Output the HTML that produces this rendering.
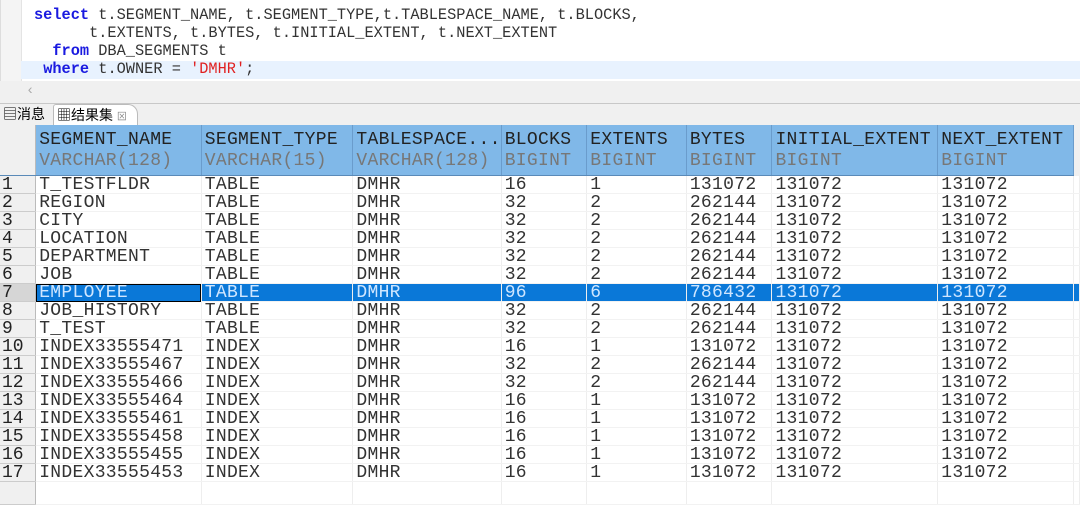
<!DOCTYPE html><html><head><style>
body{margin:0;width:1080px;height:491px;overflow:hidden;background:#fff;font-family:"Liberation Mono",monospace;position:relative}
.ed{position:absolute;left:0;top:0;width:1080px;height:81px;background:#fff;border-left:1px solid #ddd}
.gut{position:absolute;left:0;top:0;width:20px;height:81px;background:#f4f4f4;border-right:1px solid #e4e4e4}
.cl{position:absolute;left:20px;top:61px;width:1060px;height:18px;background:#e8f2fe}
.code{position:absolute;left:33px;top:6px;font-size:15.3px;line-height:18px;color:#333;white-space:pre}
.k{color:#1a1ae0;font-weight:bold}.s{color:#e02020}
.strip{position:absolute;top:81px;left:0;width:1080px;height:22px;background:#f0f0f0;border-bottom:1px solid #c8c8c8}
.tabs{position:absolute;top:104px;left:0;width:1080px;height:21px;background:#f0f0f0;font-family:"Liberation Sans","Noto Sans CJK SC",sans-serif;font-size:14px}
.tab{position:absolute;top:0;height:21px;line-height:21px}
table{position:absolute;top:125px;left:0;border-collapse:collapse;table-layout:fixed;font-size:18px;letter-spacing:0.3px}
td{padding:2px 0 0 3px;height:15px;line-height:15px;white-space:nowrap;overflow:hidden;color:#333;border-right:1px solid #eee;border-bottom:1px solid #f2f2f2;vertical-align:middle}
tr.h td{background:#80b8e8;height:45px;line-height:21px;vertical-align:top;padding-top:5px;border-right:1px solid #6a9ccc;border-bottom:1px solid #5a8ab8;color:#222}
tr.h td span{color:#777}
td.n{background:#f0f0f0;border-right:1px solid #bbb;border-bottom:1px solid #ccc;padding-left:2px;color:#222;letter-spacing:0}
tr.h td.n{background:#f0f0f0;border-right:1px solid #bbb}
tr.sel td{background:#0a78d8;color:#cfe6ff}
tr.sel td.n{background:#d6d6d6;color:#222}
tr.sel td.f{outline:1px solid #000;outline-offset:-1px}
</style></head><body>
<div class="ed"><div class="gut"></div><div class="cl"></div>
<div class="code"><span class="k">select</span> t.SEGMENT_NAME, t.SEGMENT_TYPE,t.TABLESPACE_NAME, t.BLOCKS,
      t.EXTENTS, t.BYTES, t.INITIAL_EXTENT, t.NEXT_EXTENT
  <span class="k">from</span> DBA_SEGMENTS t
 <span class="k">where</span> t.OWNER = <span class="s">'DMHR'</span>;</div></div>
<div class="strip"><span style="position:absolute;left:26px;top:2px;color:#aaa;font-size:14px">&lsaquo;</span></div>
<div class="tabs">
<div class="tab" style="left:3px">&#9636;消息</div>
<div class="tab" style="left:53px;width:80px;background:#fff;border:1px solid #bbb;border-bottom:none;border-radius:3px 10px 0 0;padding-left:3px">▦结果集 <span style="font-size:10px;color:#888">⊠</span></div>
</div>
<table>
<colgroup><col style="width:36px"><col style="width:166px"><col style="width:152px"><col style="width:137px"><col style="width:86px"><col style="width:100px"><col style="width:86px"><col style="width:166px"><col style="width:136px"><col style="width:6px"></colgroup>
<tr class="h"><td class="n"></td><td>SEGMENT_NAME<br><span>VARCHAR(128)</span></td><td>SEGMENT_TYPE<br><span>VARCHAR(15)</span></td><td>TABLESPACE...<br><span>VARCHAR(128)</span></td><td>BLOCKS<br><span>BIGINT</span></td><td>EXTENTS<br><span>BIGINT</span></td><td>BYTES<br><span>BIGINT</span></td><td>INITIAL_EXTENT<br><span>BIGINT</span></td><td>NEXT_EXTENT<br><span>BIGINT</span></td><td style="background:#f0f0f0;border:none"></td></tr>
<tr><td class="n">1</td><td>T_TESTFLDR</td><td>TABLE</td><td>DMHR</td><td>16</td><td>1</td><td>131072</td><td>131072</td><td>131072</td><td></td></tr>
<tr><td class="n">2</td><td>REGION</td><td>TABLE</td><td>DMHR</td><td>32</td><td>2</td><td>262144</td><td>131072</td><td>131072</td><td></td></tr>
<tr><td class="n">3</td><td>CITY</td><td>TABLE</td><td>DMHR</td><td>32</td><td>2</td><td>262144</td><td>131072</td><td>131072</td><td></td></tr>
<tr><td class="n">4</td><td>LOCATION</td><td>TABLE</td><td>DMHR</td><td>32</td><td>2</td><td>262144</td><td>131072</td><td>131072</td><td></td></tr>
<tr><td class="n">5</td><td>DEPARTMENT</td><td>TABLE</td><td>DMHR</td><td>32</td><td>2</td><td>262144</td><td>131072</td><td>131072</td><td></td></tr>
<tr><td class="n">6</td><td>JOB</td><td>TABLE</td><td>DMHR</td><td>32</td><td>2</td><td>262144</td><td>131072</td><td>131072</td><td></td></tr>
<tr class="sel"><td class="n">7</td><td class="f">EMPLOYEE</td><td>TABLE</td><td>DMHR</td><td>96</td><td>6</td><td>786432</td><td>131072</td><td>131072</td><td></td></tr>
<tr><td class="n">8</td><td>JOB_HISTORY</td><td>TABLE</td><td>DMHR</td><td>32</td><td>2</td><td>262144</td><td>131072</td><td>131072</td><td></td></tr>
<tr><td class="n">9</td><td>T_TEST</td><td>TABLE</td><td>DMHR</td><td>32</td><td>2</td><td>262144</td><td>131072</td><td>131072</td><td></td></tr>
<tr><td class="n">10</td><td>INDEX33555471</td><td>INDEX</td><td>DMHR</td><td>16</td><td>1</td><td>131072</td><td>131072</td><td>131072</td><td></td></tr>
<tr><td class="n">11</td><td>INDEX33555467</td><td>INDEX</td><td>DMHR</td><td>32</td><td>2</td><td>262144</td><td>131072</td><td>131072</td><td></td></tr>
<tr><td class="n">12</td><td>INDEX33555466</td><td>INDEX</td><td>DMHR</td><td>32</td><td>2</td><td>262144</td><td>131072</td><td>131072</td><td></td></tr>
<tr><td class="n">13</td><td>INDEX33555464</td><td>INDEX</td><td>DMHR</td><td>16</td><td>1</td><td>131072</td><td>131072</td><td>131072</td><td></td></tr>
<tr><td class="n">14</td><td>INDEX33555461</td><td>INDEX</td><td>DMHR</td><td>16</td><td>1</td><td>131072</td><td>131072</td><td>131072</td><td></td></tr>
<tr><td class="n">15</td><td>INDEX33555458</td><td>INDEX</td><td>DMHR</td><td>16</td><td>1</td><td>131072</td><td>131072</td><td>131072</td><td></td></tr>
<tr><td class="n">16</td><td>INDEX33555455</td><td>INDEX</td><td>DMHR</td><td>16</td><td>1</td><td>131072</td><td>131072</td><td>131072</td><td></td></tr>
<tr><td class="n">17</td><td>INDEX33555453</td><td>INDEX</td><td>DMHR</td><td>16</td><td>1</td><td>131072</td><td>131072</td><td>131072</td><td></td></tr>
<tr><td class="n" style="height:20px"></td><td></td><td></td><td></td><td></td><td></td><td></td><td></td><td></td><td></td></tr>
</table>
</body></html>
